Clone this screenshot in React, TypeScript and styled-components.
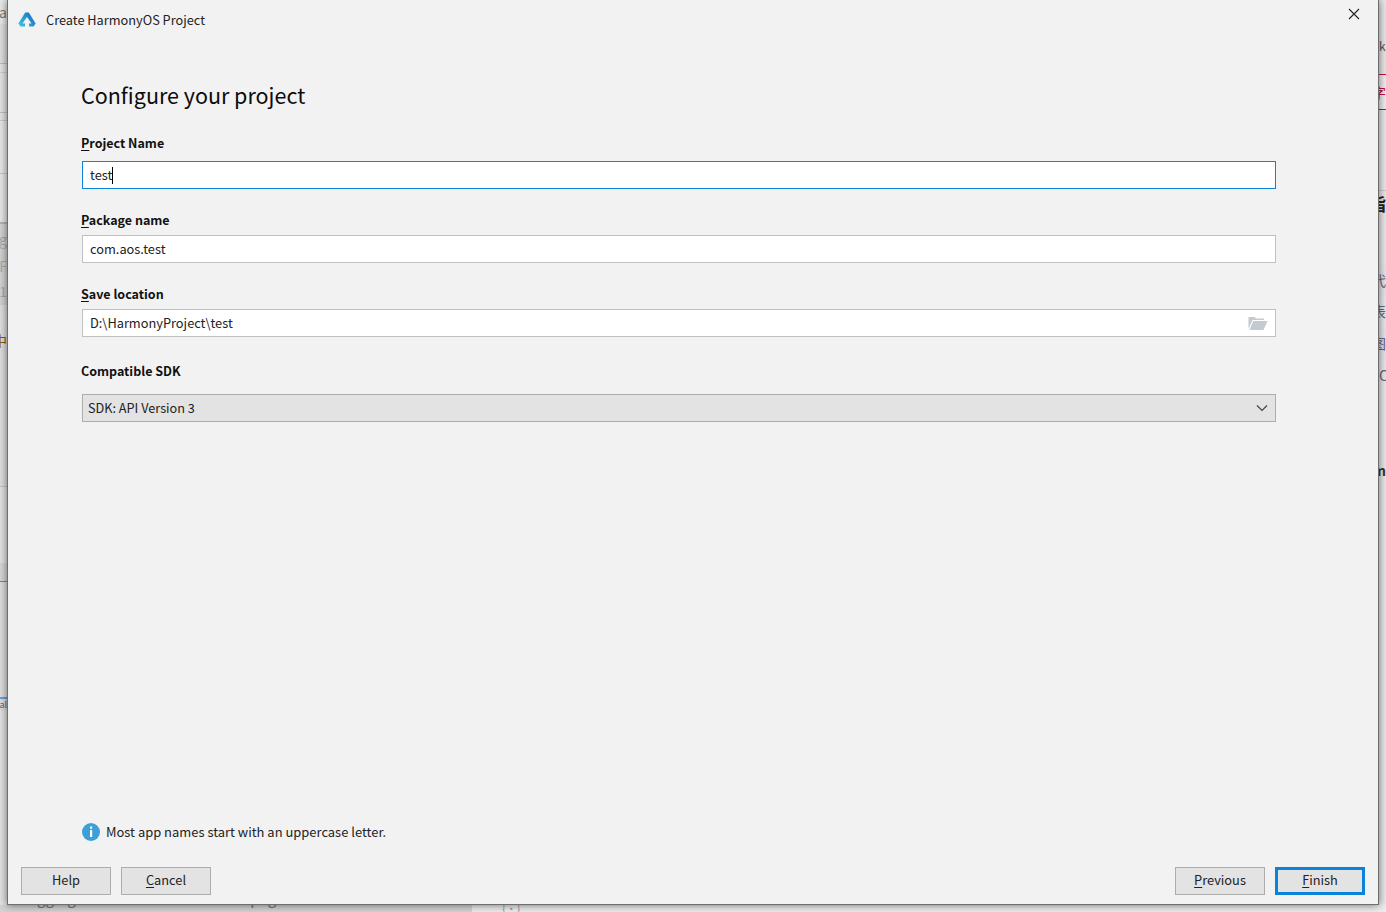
import React from "react";
import styled, { createGlobalStyle } from "styled-components";

const Global = createGlobalStyle`
  html, body { margin: 0; padding: 0; height: 912px; overflow: hidden; background: #e2e2e2; }
  * { box-sizing: border-box; }
`;

const Screen = styled.div`
  width: 1386px; height: 912px; overflow: hidden;
  display: flex; flex-direction: column;
  font-family: "Noto Sans CJK SC", "Noto Sans", sans-serif;
  font-size: 12.8px; color: #1c1c1c;
`;
const Middle = styled.div`display: flex; height: 905px; flex: none;`;
const Strip = styled.div`
  width: 7px; flex: none; display: flex; flex-direction: column; overflow: hidden;
`;
const Seg = styled.div<{ $h: number; $bg: string; $c?: string; $right?: boolean; $size?: number; $bold?: boolean }>`
  height: ${p => p.$h}px; flex: none; background: ${p => p.$bg}; color: ${p => p.$c || "#888"};
  font-size: ${p => p.$size || 14}px; font-weight: ${p => p.$bold ? 700 : 400}; line-height: ${p => p.$h}px;
  white-space: nowrap; overflow: hidden; display: flex; justify-content: ${p => p.$right ? "flex-end" : "flex-start"};
`;
const Dialog = styled.div`
  width: 1372px; flex: none; height: 905px; background: #f2f2f2;
  display: flex; flex-direction: column;
  border: 1px solid #6e6e6e; border-top-width: 0;
  box-shadow: 0 0 8px rgba(0,0,0,.55);
  position: relative; z-index: 1;
`;
const TitleBar = styled.div`
  height: 40px; flex: none; display: flex; align-items: center;
  padding: 0 16px 0 10px;
`;
const TitleText = styled.div`margin-left: 10px; flex: 1; line-height: 40px; color: #222; font-size: 12.75px;`;
const CloseBtn = styled.div`width: 16px; height: 16px; margin-top: -12px; display: flex;`;
const Body = styled.div`flex: 1; padding: 0 102px 0 73px; display: flex; flex-direction: column;`;
const Heading = styled.div`
  font-size: 21.5px; line-height: 32px; margin-top: 39px; color: #0c0c0c; margin-bottom: 22px;
`;
const Label = styled.div<{ $mb?: number }>`
  font-weight: 700; font-size: 12.5px; line-height: 20px; color: #111; margin-bottom: ${p => p.$mb ?? 8}px;
`;
const Field = styled.div<{ $focus?: boolean; $mb?: number }>`
  margin-left: 1px; height: 28px; flex: none; background: #fff;
  border: 1px solid ${p => p.$focus ? "#0a84d8" : "#c0c0c0"};
  padding: 0 7px; display: flex; align-items: center; justify-content: space-between; line-height: 26px;
  margin-bottom: ${p => p.$mb ?? 21}px; color: #222;
`;
const Caret = styled.span`display: inline-block; width: 1px; height: 17px; background: #000; vertical-align: -4px;`;
const Combo = styled.div`
  margin-left: 1px; height: 28px; flex: none; background: #e3e3e3; border: 1px solid #adadad;
  padding: 0 7px 0 5px; display: flex; align-items: center; justify-content: space-between; color: #222;
`;
const ComboText = styled.span`padding-bottom: 2px; font-size: 12.7px;`;
const Spacer = styled.div`flex: 1;`;
const Hint = styled.div`
  display: flex; align-items: center; gap: 6px; margin-left: 1px; height: 20px; margin-bottom: 25px; color: #222;
`;
const HintText = styled.span`padding-bottom: 1px; font-size: 12.95px;`;
const Footer = styled.div`
  height: 37px; flex: none; padding: 0 13px 9px 13px; display: flex; justify-content: space-between;
`;
const Group = styled.div`display: flex; gap: 10px;`;
const Btn = styled.div<{ $primary?: boolean }>`
  width: 90px; height: 28px; background: #e3e3e3; display: flex; align-items: center; justify-content: center;
  border: ${p => p.$primary ? "3px solid #0a84d8" : "1px solid #adadad"}; color: #222;
  padding-bottom: 3px;
`;
const Mn = styled.u`text-underline-offset: 2px; text-decoration-thickness: 1px;`;
const Bottom = styled.div`
  height: 7px; flex: none; background: #d2d2d2; color: #777; font-size: 15px;
  white-space: nowrap; overflow: hidden; display: flex;
`;
const BottomText = styled.div`width: 472px; flex: none; margin-top: -17px; line-height: 20px; height: 24px; overflow: hidden;`;
const BottomRest = styled.div`
  flex: 1; background: #ececec; padding-left: 30px; color: #999; font-size: 11px; line-height: 7px; overflow: hidden;
`;

const LogoIcon = () => (
  <svg width="18" height="15" viewBox="0 0 18 15" style={{ marginTop: -1 }}>
    <defs>
      <linearGradient id="lg" x1="0" y1="0.9" x2="1" y2="0.2">
        <stop offset="0" stopColor="#3cc8d8" />
        <stop offset="1" stopColor="#1668c8" />
      </linearGradient>
    </defs>
    <path
      d="M7.2 0.5 H10.8 L17.6 11.6 L15.6 14.5 H11 V11.5 H13.5 L9 5 L4.5 11.5 H7 V14.5 H2.4 L0.4 11.6 Z"
      fill="url(#lg)"
    />
  </svg>
);
const CloseIcon = () => (
  <svg width="16" height="16" viewBox="0 0 16 16"><path d="M3 3 L13 13 M13 3 L3 13" stroke="#222" strokeWidth="1.1" /></svg>
);
const FolderIcon = () => (
  <svg width="20" height="14" viewBox="0 0 20 14">
    <path d="M0.5 13 V1 H6.5 L8 2.6 H16 V4 H4.5 L0.5 13 Z" fill="#c3cbd0" />
    <path d="M5.3 5 H19.5 L15.5 14 H1.5 Z" fill="#c3cbd0" />
  </svg>
);
const ChevronIcon = () => (
  <svg width="12" height="8" viewBox="0 0 12 8"><path d="M1 1.5 L6 6.5 L11 1.5" fill="none" stroke="#444" strokeWidth="1.2" /></svg>
);
const InfoIcon = () => (
  <svg width="18" height="18" viewBox="0 0 18 18">
    <circle cx="9" cy="9" r="9" fill="#3d9fd8" />
    <rect x="8" y="3.5" width="2.2" height="2.2" fill="#fff" />
    <rect x="8" y="7" width="2.2" height="7" fill="#fff" />
  </svg>
);

export default function App() {
  return (
    <Screen>
      <Global />
      <Middle>
        <Strip>
          <Seg $h={24} $bg="#e8e8e8" $c="#777" $right><span>Fa</span></Seg>
          <Seg $h={39} $bg="#dedede" />
          <Seg $h={1} $bg="#bdbdbd" />
          <Seg $h={8} $bg="#e3e3e3" />
          <Seg $h={1} $bg="#cccccc" />
          <Seg $h={39} $bg="#e3e3e3" />
          <Seg $h={1} $bg="#c0c0c0" />
          <Seg $h={7} $bg="#e3e3e3" />
          <Seg $h={1} $bg="#c8c8c8" />
          <Seg $h={52} $bg="#e6e6e6" />
          <Seg $h={1} $bg="#c8c8c8" />
          <Seg $h={48} $bg="#e6e6e6" />
          <Seg $h={2} $bg="#b3b3b3" />
          <Seg $h={30} $bg="#d2d2d2" $c="#aaa" $right><span>og</span></Seg>
          <Seg $h={24} $bg="#d2d2d2" $c="#aaa" $right><span>F</span></Seg>
          <Seg $h={27} $bg="#d2d2d2" $c="#aaa" $right><span>1</span></Seg>
          <Seg $h={24} $bg="#dedede" />
          <Seg $h={22} $bg="#dedede" $c="#8a5a10" $right><span>中</span></Seg>
          <Seg $h={135} $bg="#dedede" />
          <Seg $h={1} $bg="#c4c4c4" />
          <Seg $h={76} $bg="#e2e2e2" />
          <Seg $h={18} $bg="#d6d6d6" />
          <Seg $h={1} $bg="#4f8fd0" />
          <Seg $h={115} $bg="#dddddd" />
          <Seg $h={2} $bg="#6a9fd8" />
          <Seg $h={12} $bg="#dddddd" $c="#666" $size={9} $right><span>al</span></Seg>
          <Seg $h={200} $bg="#e2e2e2" />
        </Strip>
        <Dialog>
          <TitleBar>
            <LogoIcon />
            <TitleText>Create HarmonyOS Project</TitleText>
            <CloseBtn><CloseIcon /></CloseBtn>
          </TitleBar>
          <Body>
            <Heading>Configure your project</Heading>
            <Label><Mn>P</Mn>roject Name</Label>
            <Field $focus><span>test<Caret /></span></Field>
            <Label $mb={5}><Mn>P</Mn>ackage name</Label>
            <Field>com.aos.test</Field>
            <Label $mb={5}><Mn>S</Mn>ave location</Label>
            <Field $mb={24}>D:\HarmonyProject\test<FolderIcon /></Field>
            <Label $mb={13}>Compatible SDK</Label>
            <Combo><ComboText>SDK: API Version 3</ComboText><ChevronIcon /></Combo>
            <Spacer />
            <Hint><InfoIcon /><HintText>Most app names start with an uppercase letter.</HintText></Hint>
          </Body>
          <Footer>
            <Group>
              <Btn>Help</Btn>
              <Btn><span><Mn>C</Mn>ancel</span></Btn>
            </Group>
            <Group>
              <Btn><span><Mn>P</Mn>revious</span></Btn>
              <Btn $primary><span><Mn>F</Mn>inish</span></Btn>
            </Group>
          </Footer>
        </Dialog>
        <Strip>
          <Seg $h={38} $bg="#e6e6e6" />
          <Seg $h={16} $bg="#e6e6e6" $c="#555" $size={12}><span>k</span></Seg>
          <Seg $h={20} $bg="#e6e6e6" />
          <Seg $h={1} $bg="#c8103a" />
          <Seg $h={34} $bg="#eeeeee" $c="#c8103a" $right><span>字</span></Seg>
          <Seg $h={1} $bg="#c8103a" />
          <Seg $h={80} $bg="#e8e8e8" />
          <Seg $h={1} $bg="#cccccc" />
          <Seg $h={24} $bg="#e8e8e8" $c="#222" $size={18} $bold $right><span>指</span></Seg>
          <Seg $h={50} $bg="#e8e8e8" />
          <Seg $h={30} $bg="#e4e4ea" $c="#667" $right><span>代</span></Seg>
          <Seg $h={32} $bg="#e8e8ea" $c="#667" $right><span>表</span></Seg>
          <Seg $h={32} $bg="#e4e4ea" $c="#667" $right><span>图</span></Seg>
          <Seg $h={32} $bg="#e8e8ea" $c="#667"><span>C</span></Seg>
          <Seg $h={72} $bg="#e8e8e8" />
          <Seg $h={14} $bg="#e8e8e8" $c="#333" $bold $right><span>m</span></Seg>
          <Seg $h={430} $bg="#e8e8e8" />
        </Strip>
      </Middle>
      <Bottom>
        <BottomText>Debugging an business service on a page in Java</BottomText>
        <BottomRest>{"{·}"}</BottomRest>
      </Bottom>
    </Screen>
  );
}
